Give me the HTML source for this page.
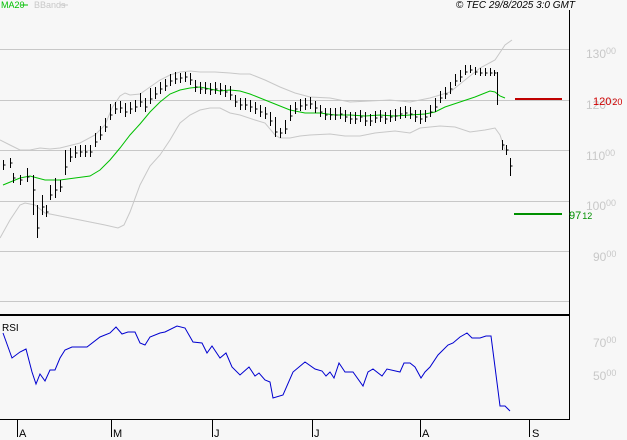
<!DOCTYPE html>
<html><head><style>
body{margin:0;background:#f7f7f7;}
svg{display:block;font-family:"Liberation Sans",sans-serif;}
</style></head><body>
<svg width="627" height="440" viewBox="0 0 627 440">
<rect width="627" height="440" fill="#f7f7f7"/>
<g stroke="#c8c8c8" stroke-width="1">
<line x1="0" y1="49.5" x2="569" y2="49.5"/>
<line x1="0" y1="100.5" x2="569" y2="100.5"/>
<line x1="0" y1="150.5" x2="569" y2="150.5"/>
<line x1="0" y1="201.5" x2="569" y2="201.5"/>
<line x1="0" y1="251.5" x2="569" y2="251.5"/>
<line x1="0" y1="301.5" x2="569" y2="301.5"/>
</g>
<g fill="none" stroke="#c8c8c8" stroke-width="1">
<polyline points="0,140 10,145 20,150 30,150 40,148 50,149 60,148 80,143 95,135 105,125 112,108 120,96 125,93 130,95 140,94 150,87 160,80 170,75 180,72 190,71 200,72 215,72 230,73 240,74 250,74 265,80 280,87 295,93 310,97 330,98 350,102 370,101 390,100 410,102 430,98 450,92 465,80 480,68 495,60 505,45 512,40"/>
<polyline points="0,238 10,220 20,205 25,203 35,205 45,213 55,215 70,218 90,222 105,225 118,228 124,225 130,212 140,185 150,166 160,155 170,140 180,123 190,115 200,110 210,108 220,108 230,113 240,115 255,120 265,123 275,135 280,138 290,138 300,136 310,135 330,134 345,136 360,136 375,133 395,131 410,133 420,128 440,126 455,127 470,132 485,130 495,128 500,135 505,150"/>
</g>
<polyline fill="none" stroke="#00c000" stroke-width="1" points="3,185 20,178 30,176 45,180 60,180 75,178 90,176 100,170 110,160 120,148 130,135 140,124 150,112 160,102 170,94 180,90 190,88 200,87 210,89 220,91 230,90 240,91 250,94 265,100 275,104 290,110 305,113 320,113 335,115 350,115 365,116 380,115 395,116 410,115 425,114 435,112 445,107 460,102 475,97 485,93 490,91 495,92 500,96 505,98"/>
<path fill="none" stroke="#000" stroke-width="1" d="M3.5 160v10m0-5h2M10.5 158v10m0-5h2M13.5 173v10m0-5h2M20.5 175v10m0-5h2M27.5 168v14m0-5h2M33.5 175v40m0-25h2M37.5 205v33m0-10h2M42.5 195v20m0-8h2M46.5 205v12m0-5h2M50.5 185v15m0-5h2M55.5 178v20m0-8h2M60.5 180v12m0-5h2M65.5 150v25m0-8h2M70.5 148v14m0-5h2M75.5 146v12m0-5h2M80.5 145v12m0-5h2M85.5 145v12m0-5h2M90.5 145v12m0-5h2M95.5 133v14m0-5h2M100.5 126v14m0-5h2M105.5 118v14m0-5h2M110.5 104v16m0-5h2M115.5 102v12m0-5h2M120.5 101v12m0-5h2M125.5 103v14m0-5h2M130.5 102v12m0-5h2M135.5 100v12m0-5h2M140.5 93v14m0-5h2M145.5 98v14m0-5h2M150.5 88v16m0-5h2M155.5 87v12m0-5h2M160.5 82v12m0-5h2M165.5 79v12m0-5h2M170.5 74v12m0-5h2M175.5 72v12m0-5h2M180.5 73v10m0-5h2M185.5 72v10m0-5h2M190.5 73v12m0-5h2M195.5 80v12m0-5h2M200.5 82v12m0-5h2M205.5 82v12m0-5h2M210.5 83v12m0-5h2M215.5 82v12m0-5h2M220.5 83v12m0-5h2M225.5 85v12m0-5h2M230.5 86v14m0-5h2M235.5 95v12m0-5h2M240.5 98v12m0-5h2M245.5 98v12m0-5h2M250.5 100v12m0-5h2M255.5 102v12m0-5h2M260.5 105v12m0-5h2M265.5 107v12m0-5h2M270.5 112v14m0-5h2M275.5 117v20m0-5h2M280.5 128v10m0-5h2M285.5 120v14m0-5h2M290.5 105v16m0-5h2M295.5 102v12m0-5h2M300.5 99v12m0-5h2M305.5 98v12m0-5h2M310.5 97v12m0-5h2M315.5 101v12m0-5h2M320.5 105v12m0-5h2M325.5 108v12m0-5h2M330.5 108v12m0-5h2M335.5 108v12m0-5h2M340.5 107v12m0-5h2M345.5 110v12m0-5h2M350.5 112v12m0-5h2M355.5 112v12m0-5h2M360.5 110v12m0-5h2M365.5 112v14m0-5h2M370.5 114v12m0-5h2M375.5 111v12m0-5h2M380.5 110v12m0-5h2M385.5 112v12m0-5h2M390.5 110v12m0-5h2M395.5 109v12m0-5h2M400.5 107v12m0-5h2M405.5 106v12m0-5h2M410.5 107v12m0-5h2M415.5 110v12m0-5h2M420.5 110v14m0-5h2M425.5 110v12m0-5h2M430.5 105v12m0-5h2M435.5 98v14m0-5h2M440.5 91v12m0-5h2M445.5 87v12m0-5h2M450.5 82v12m0-5h2M455.5 74v12m0-5h2M460.5 70v12m0-5h2M465.5 65v10m0-3h2M470.5 65v8m0-3h2M475.5 67v8m0-3h2M480.5 68v8m0-3h2M485.5 68v8m0-3h2M490.5 68v8m0-3h2M494.5 70v6m0-3h2M497.5 72v33M502.5 140v10m0-5h2M506.5 145v10m0-5h2M510.5 158v18m0-10h2"/>
<line x1="515" y1="99" x2="562" y2="99" stroke="#c00000" stroke-width="2"/>
<line x1="514" y1="214" x2="562" y2="214" stroke="#009000" stroke-width="2"/>
<line x1="569.5" y1="10" x2="569.5" y2="420" stroke="#000" stroke-width="1"/>
<line x1="0" y1="315" x2="570" y2="315" stroke="#000" stroke-width="2"/>
<line x1="0" y1="419.5" x2="570" y2="419.5" stroke="#000" stroke-width="1"/>
<g stroke="#000"><line x1="17.5" y1="420" x2="17.5" y2="437"/><line x1="111.5" y1="420" x2="111.5" y2="437"/><line x1="212.5" y1="420" x2="212.5" y2="437"/><line x1="312.5" y1="420" x2="312.5" y2="437"/><line x1="420.5" y1="420" x2="420.5" y2="437"/><line x1="529.5" y1="420" x2="529.5" y2="437"/></g>
<polyline fill="none" stroke="#0000d0" stroke-width="1" points="3,333 12,358 20,352 26,349 32,372 36,384 40,374 45,381 50,370 55,370 60,358 65,350 72,347 87,347 100,337 110,333 116,327 122,334 128,332 135,332 140,343 145,345 150,337 160,333 165,332 177,326 185,328 193,342 202,343 207,353 212,346 220,358 226,353 232,367 240,375 249,367 255,376 259,373 265,380 270,382 273,398 283,395 293,372 305,362 315,369 322,371 326,376 330,372 334,378 339,363 345,372 353,372 363,386 368,372 373,369 382,376 387,369 400,372 404,363 410,363 415,367 421,378 425,372 430,367 438,355 448,345 453,343 460,337 467,333 472,338 480,338 486,336 491,336 495,367 500,406 505,406 510,411"/>
<g font-size="11" fill="#000"><text x="19" y="437">A</text><text x="113" y="437">M</text><text x="214" y="437">J</text><text x="314" y="437">J</text><text x="422" y="437">A</text><text x="532" y="437">S</text><text x="2" y="331" font-size="10">RSI</text></g>
<text x="1" y="8" font-size="9" fill="#00c000">MA20</text><line x1="21" y1="5" x2="28" y2="5" stroke="#00c000"/>
<text x="34" y="8" font-size="9" fill="#c8c8c8">BBands</text><line x1="60" y1="5" x2="68" y2="5" stroke="#c8c8c8"/>
<text x="575" y="8" font-size="10" font-style="italic" fill="#000" text-anchor="end">© TEC 29/8/2025 3:0 GMT</text>
<g fill="#c8c8c8" font-size="12">
<text x="586" y="58">130<tspan font-size="9" dy="-4">00</tspan></text>
<text x="586" y="109">120<tspan font-size="9" dy="-4">00</tspan></text>
<text x="586" y="160">110<tspan font-size="9" dy="-4">00</tspan></text>
<text x="586" y="210">100<tspan font-size="9" dy="-4">00</tspan></text>
<text x="593" y="261">90<tspan font-size="9" dy="-4">00</tspan></text>
<text x="593" y="347">70<tspan font-size="9" dy="-4">00</tspan></text>
<text x="593" y="380">50<tspan font-size="9" dy="-4">00</tspan></text>
</g>
<text x="593" y="105" font-size="11" fill="#d00000">120<tspan font-size="9" dx="1">20</tspan></text>
<text x="569" y="219" font-size="11" fill="#009000">97<tspan font-size="9" dx="1">12</tspan></text>
</svg>
</body></html>
